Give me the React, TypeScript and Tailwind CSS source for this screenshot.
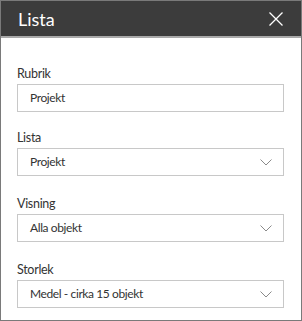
type Field = {
  label: string;
  value: string;
  select: boolean;
  mt: string;
};

const fields: Field[] = [
  { label: "Rubrik", value: "Projekt", select: false, mt: "mt-[26px]" },
  { label: "Lista", value: "Projekt", select: true, mt: "mt-4" },
  { label: "Visning", value: "Alla objekt", select: true, mt: "mt-[18px]" },
  { label: "Storlek", value: "Medel - cirka 15 objekt", select: true, mt: "mt-[18px]" },
];

export default function App() {
  return (
    <div
      className="flex h-[321px] w-[302px] flex-col border border-[#7a7a7a] bg-white"
      style={{ fontFamily: 'Lato, "Liberation Sans", Arial, sans-serif' }}
    >
      <header className="flex h-[37px] shrink-0 items-center justify-between border-b-2 border-b-[#a9a9a9] bg-[#3c3c3c] pl-[17px] pr-[18px] text-white">
        <h1 className="text-[18px] leading-none">Lista</h1>
        <CloseIcon />
      </header>

      <div className="pl-4 pr-[17px]">
        {fields.map((field) => (
          <div className={field.mt} key={field.label}>
            <label className="block text-[12.5px] leading-5 tracking-[-0.3px] text-[#333333]">
              {field.label}
            </label>
            <div className="flex h-[28px] items-center justify-between border border-[#c8c8c8] pl-3 pr-[11px] text-[12px] tracking-[-0.4px] text-[#333333]">
              <span>{field.value}</span>
              {field.select ? <Chevron /> : null}
            </div>
          </div>
        ))}
      </div>
    </div>
  );
}

function CloseIcon() {
  return (
    <svg width="14" height="14" viewBox="0 0 14 14" fill="none" aria-hidden>
      <path d="M0.5 0.5 L13.5 13.5 M13.5 0.5 L0.5 13.5" stroke="#ffffff" strokeWidth="1.3" />
    </svg>
  );
}

function Chevron() {
  return (
    <svg width="12" height="7" viewBox="0 0 12 7" fill="none" aria-hidden>
      <path d="M0.5 0.5 L6 6 L11.5 0.5" stroke="#8a8a8a" strokeWidth="1" />
    </svg>
  );
}
